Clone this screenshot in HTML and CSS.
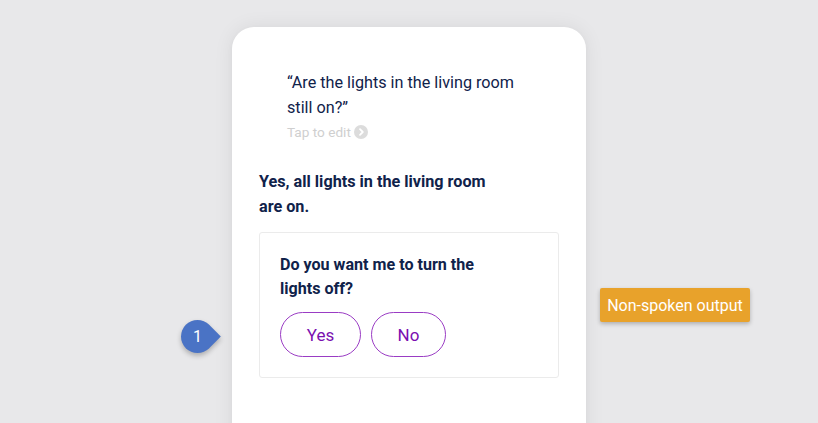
FILE: index.html
```html
<!DOCTYPE html>
<html>
<head>
<meta charset="utf-8">
<link rel="stylesheet" href="styles.css">
</head>
<body>
<div class="stage">
  <div class="card">
    <div class="query">
      <p class="query-text">“Are the lights in the living room still on?”</p>
      <div class="edit">Tap to edit
        <svg class="edit-icon" width="14" height="14" viewBox="0 0 14 14"><circle cx="7" cy="7" r="7" fill="#dcdcdc"/><path d="M6 4.2 L8.8 7 L6 9.8" fill="none" stroke="#fff" stroke-width="1.8" stroke-linecap="round" stroke-linejoin="round"/></svg>
      </div>
    </div>
    <p class="answer">Yes, all lights in the living room are on.</p>
    <div class="prompt">
      <p class="prompt-text">Do you want me to turn the lights off?</p>
      <div class="actions">
        <button class="chip chip-yes">Yes</button>
        <button class="chip chip-no">No</button>
      </div>
    </div>
  </div>
  <div class="marker">1</div>
  <div class="label">Non-spoken output</div>
</div>
</body>
</html>
```
FILE: styles.css
```css
html, body {
  margin: 0;
  padding: 0;
  background: #e8e8ea;
  font-family: Roboto, "Liberation Sans", sans-serif;
}
.stage {
  position: relative;
  width: 818px;
  height: 423px;
  overflow: hidden;
  display: flex;
  justify-content: center;
  padding-top: 27px;
  box-sizing: border-box;
}
.card {
  width: 354px;
  height: 440px;
  background: #fff;
  border-radius: 22px;
  box-shadow: 0 0 20px rgba(0,0,0,0.07), 0 2px 6px rgba(0,0,0,0.03);
  box-sizing: border-box;
  padding: 43px 27px 0 27px;
}
.query {
  padding-left: 28px;
}
.query-text {
  margin: 0;
  width: 240px;
  font-size: 16.2px;
  line-height: 25px;
  color: #10224a;
}
.edit {
  display: flex;
  align-items: center;
  gap: 3px;
  margin-top: 2px;
  font-size: 13.6px;
  line-height: 20px;
  color: #cfcfcf;
}
.answer {
  margin: 27px 0 0 0;
  width: 240px;
  font-size: 16.2px;
  font-weight: 700;
  line-height: 25px;
  color: #10224a;
}
.prompt {
  margin-top: 13px;
  border: 1px solid #ebebeb;
  border-radius: 3px;
  height: 146px;
  box-sizing: border-box;
  padding: 20px 20px 0 20px;
}
.prompt-text {
  margin: 0;
  width: 210px;
  font-size: 16.1px;
  font-weight: 700;
  line-height: 24px;
  color: #10224a;
}
.actions {
  display: flex;
  gap: 10px;
  margin-top: 11px;
}
.chip {
  height: 45px;
  border: 1.5px solid #9a3cc4;
  border-radius: 23px;
  background: #fff;
  color: #7a0fb0;
  font-family: Roboto, "Liberation Sans", sans-serif;
  font-size: 17px;
  padding: 0;
}
.chip-yes { width: 81px; }
.chip-no { width: 75px; }
.marker {
  position: absolute;
  left: 181px;
  top: 320px;
  width: 33px;
  height: 33px;
  border-radius: 50% 0 50% 50%;
  transform: rotate(45deg);
  background: #4a73c5;
  box-shadow: 2px 2px 5px rgba(0,0,0,0.25);
  color: transparent;
}
.marker::after {
  content: "1";
  position: absolute;
  inset: 0;
  display: flex;
  align-items: center;
  justify-content: center;
  transform: rotate(-45deg);
  color: #fff;
  font-size: 16px;
}
.label {
  position: absolute;
  left: 600px;
  top: 288px;
  width: 150px;
  height: 34px;
  background: #e8a22b;
  color: #fff;
  font-size: 16px;
  display: flex;
  align-items: center;
  justify-content: center;
  border-radius: 2px;
  box-shadow: 0 2px 4px rgba(0,0,0,0.25);
}
```
